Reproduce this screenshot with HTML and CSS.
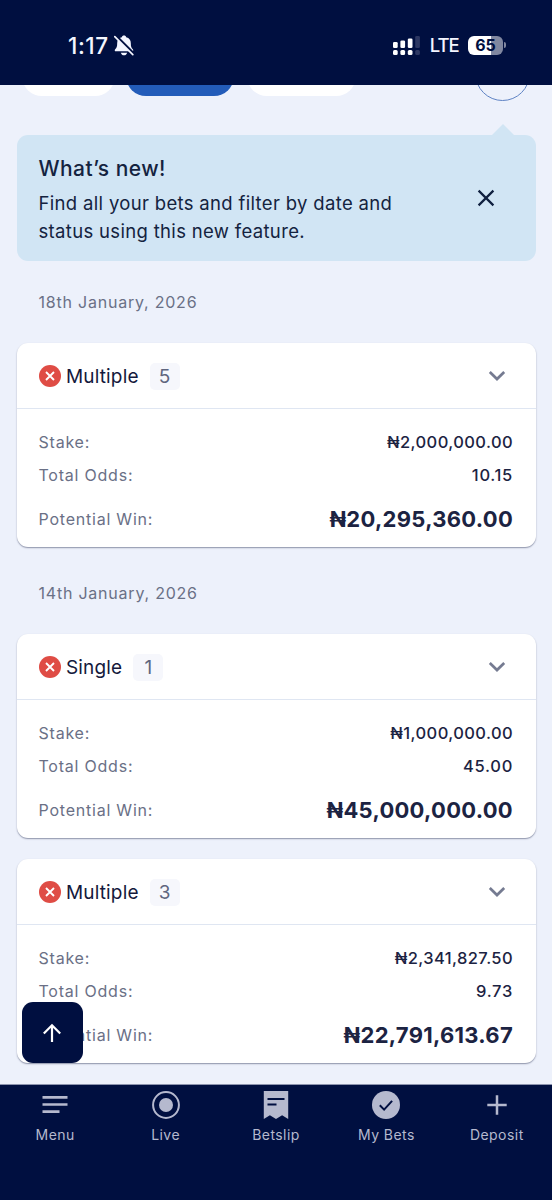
FILE: index.html
```html
<!DOCTYPE html>
<html lang="en">
<head>
<meta charset="utf-8">
<title>My Bets</title>
<link rel="stylesheet" href="styles.css">
</head>
<body>
<svg width="0" height="0" class="defs">
  <symbol id="lost" viewBox="0 0 22 22"><circle cx="11" cy="11" r="11" fill="#df4c45"/><path d="M7 7l8 8M15 7l-8 8" stroke="#fff" stroke-width="1.9" fill="none"/></symbol>
  <symbol id="chevron" viewBox="0 0 18 12"><path d="M1.8 2l7.2 7 7.2-7" stroke="#757b91" stroke-width="2.7" fill="none"/></symbol>
</svg>
<div class="screen">
  <header class="status">
    <div class="status-left">
      <span class="time">1:17</span>
      <svg class="bell" width="20" height="21" viewBox="0 0 20 21">
        <path d="M10 .5c-1.200 0-2 .7-2.200 1.700C4.600 3 3.200 5.200 3.200 8c0 3.800-.6 5-2 6.200-.9.800-.5 2.100.6 2.100h16.400c1.100 0 1.500-1.300.6-2.100-1.400-1.200-2-2.400-2-6.200 0-2.800-1.400-5-4.600-5.800C12 1.200 11.200.5 10 .5z" fill="#f4f6ff"/>
        <path d="M6.800 17.700h6.400c-.5 1.600-1.700 2.600-3.200 2.600s-2.700-1-3.200-2.600z" fill="#f4f6ff"/>
        <path d="M1.800 .8l18 18" stroke="#000f40" stroke-width="2.800"/>
        <path d="M.8 1.600l18 18" stroke="#f4f6ff" stroke-width="1.700" stroke-linecap="round"/>
      </svg>
    </div>
    <div class="status-right">
      <svg width="27" height="19" viewBox="0 0 27 19" fill="#fff">
        <rect x="0" y="6" width="4.700" height="6" rx="1.300"/><rect x="7.400" y="4.500" width="4.700" height="7.500" rx="1.300"/><rect x="14.800" y="2.500" width="4.700" height="9.500" rx="1.300"/>
        <rect x="0" y="14" width="4.700" height="5" rx="1.500"/><rect x="7.400" y="14" width="4.700" height="5" rx="1.500"/><rect x="14.800" y="14" width="4.700" height="5" rx="1.500"/>
        <g fill="#2c3762"><rect x="22.200" y="0" width="4.700" height="12" rx="1.300"/><rect x="22.200" y="14" width="4.700" height="5" rx="1.500"/></g>
      </svg>
      <span class="network">LTE</span>
      <span class="battery">65</span><span class="battery-tip"></span>
    </div>
  </header>

  <main class="content">
    <div class="filters">
      <span class="pill pill-a"></span><span class="pill pill-b"></span><span class="pill pill-c"></span><span class="round"></span>
    </div>
    <section class="notice">
      <div class="notice-text">
        <h1>What’s new!</h1>
        <p>Find all your bets and filter by date and<br>status using this new feature.</p>
      </div>
      <svg width="18" height="18" viewBox="0 0 18 18"><path d="M1.600 1.600l14.800 14.800M16.400 1.600L1.600 16.400" stroke="#10203f" stroke-width="2.200"/></svg>
    </section>

    <h2 class="date">18th January, 2026</h2>
    <article class="card">
      <div class="card-head"><svg width="22" height="22"><use href="#lost"/></svg><span class="kind">Multiple</span><span class="count">5</span><svg class="chev" width="18" height="12"><use href="#chevron"/></svg></div>
      <div class="card-body">
        <div class="row"><span>Stake:</span><b>₦2,000,000.00</b></div>
        <div class="row"><span>Total Odds:</span><b class="odds">10.15</b></div>
        <div class="row win"><span>Potential Win:</span><b>₦20,295,360.00</b></div>
      </div>
    </article>

    <h2 class="date">14th January, 2026</h2>
    <article class="card">
      <div class="card-head"><svg width="22" height="22"><use href="#lost"/></svg><span class="kind">Single</span><span class="count">1</span><svg class="chev" width="18" height="12"><use href="#chevron"/></svg></div>
      <div class="card-body">
        <div class="row"><span>Stake:</span><b>₦1,000,000.00</b></div>
        <div class="row"><span>Total Odds:</span><b class="odds">45.00</b></div>
        <div class="row win"><span>Potential Win:</span><b>₦45,000,000.00</b></div>
      </div>
    </article>
    <article class="card">
      <div class="card-head"><svg width="22" height="22"><use href="#lost"/></svg><span class="kind">Multiple</span><span class="count">3</span><svg class="chev" width="18" height="12"><use href="#chevron"/></svg></div>
      <div class="card-body">
        <div class="row"><span>Stake:</span><b>₦2,341,827.50</b></div>
        <div class="row"><span>Total Odds:</span><b class="odds">9.73</b></div>
        <div class="row win"><span>Potential Win:</span><b>₦22,791,613.67</b></div>
      </div>
    </article>
    <button class="to-top" aria-label="Scroll to top"><svg width="20" height="20" viewBox="0 0 20 20"><path d="M10 19V2.500M1.800 10.500L10 2.200l8.200 8.300" stroke="#fff" stroke-width="2.200" fill="none"/></svg></button>
  </main>

  <nav class="tabs">
    <a class="tab"><svg width="28" height="28" viewBox="0 0 28 28"><path d="M1.500 6.400h25M1.500 13.500h25M1.500 20.600h17" stroke="#b5b9ce" stroke-width="2.600"/></svg><span>Menu</span></a>
    <a class="tab"><svg width="28" height="28" viewBox="0 0 28 28"><circle cx="14" cy="14" r="12.900" fill="none" stroke="#b5b9ce" stroke-width="2"/><circle cx="14" cy="14" r="7" fill="#b5b9ce"/></svg><span>Live</span></a>
    <a class="tab"><svg width="28" height="28" viewBox="0 0 28 28"><path d="M1.800 0h24.400v28l-6.100-3.700L14 28l-6.100-3.700L1.800 28z" fill="#b5b9ce"/><path d="M5.500 8h17M5.500 13.500h9" stroke="#000f40" stroke-width="2"/></svg><span>Betslip</span></a>
    <a class="tab"><svg width="28" height="28" viewBox="0 0 28 28"><circle cx="14" cy="14" r="14" fill="#b5b9ce"/><path d="M7.800 14.200l4.300 4.400 8-8.800" stroke="#000f40" stroke-width="2" fill="none"/></svg><span>My Bets</span></a>
    <a class="tab"><svg width="28" height="28" viewBox="0 0 28 28"><path d="M14 4.300v19.400M4.300 14h19.400" stroke="#b5b9ce" stroke-width="2.500"/></svg><span>Deposit</span></a>
  </nav>
</div>
</body>
</html>
```

FILE: styles.css
```css
* { box-sizing: border-box; }
body { margin: 0; font-family: Inter, "Noto Sans", sans-serif; background: #edf1fb; }
h1, h2, p { margin: 0; font-weight: 400; }
.defs { display: block; }
.screen { width: 552px; height: 1200px; display: flex; flex-direction: column; overflow: hidden; }

.status { height: 85px; flex: none; background: #000f40; color: #f4f6ff; display: flex; justify-content: space-between; padding: 5px 46px 0 68px; }
.status-left, .status-right { display: flex; align-items: center; }
.time { font-size: 22.500px; font-weight: 550; letter-spacing: 0.6px; }
.bell { margin-left: 5px; }
.network { font-size: 18.500px; font-weight: 500; letter-spacing: -1.1px; margin-left: 10px; }
.battery { width: 35px; height: 19px; margin-left: 9.500px; border-radius: 6px; background: linear-gradient(90deg, #fff 65%, #8087a0 65%); color: #000f40; font-size: 16px; font-weight: 700; line-height: 19px; text-align: center; }
.battery-tip { width: 2px; height: 6px; margin-left: 1px; border-radius: 0 2px 2px 0; background: #8087a0; }

.content { position: relative; height: 999px; flex: none; overflow: hidden; padding: 0 16.500px; }
.filters { display: flex; align-items: flex-end; height: 16px; margin: 0 5.500px 33.500px; }
.pill { flex: none; height: 40px; border-radius: 20px; background: #fff; margin-bottom: 5px; }
.pill-a { width: 93px; }
.pill-b { width: 108px; margin-left: 11px; background: #235cb9; }
.pill-c { width: 109px; margin-left: 13px; }
.round { flex: none; width: 55px; height: 55px; border: 1px solid #5f83c4; border-radius: 50%; margin-left: 119px; }

.notice { position: relative; height: 126.500px; border-radius: 11px; background: #d1e5f4; color: #14233f; display: flex; justify-content: space-between; padding: 19px 40.500px 0 22px; }
.notice::before { content: ""; position: absolute; top: -11px; right: 22px; border: 11px solid transparent; border-top: 0; border-bottom-color: #d1e5f4; }
.notice h1 { font-size: 21px; line-height: 29px; font-weight: 450; letter-spacing: 0.45px; }
.notice p { font-size: 18.500px; line-height: 28px; letter-spacing: 0.33px; margin-top: 6.500px; }
.notice svg { margin-top: 35px; flex: none; }

.date { font-size: 16px; line-height: 20px; color: #6a7086; letter-spacing: 0.78px; padding: 31px 22px; }
.card + .date { padding-top: 36px; padding-bottom: 31px; }
.card { height: 204px; border-radius: 11px; background: #fff; box-shadow: 0 1px 1.500px #8b91a8; }
.card + .card { margin-top: 21px; }
.card-head { height: 66px; border-bottom: 1px solid #dfe6f2; display: flex; align-items: center; padding: 1px 30px 0 22px; }
.kind { font-size: 19px; color: #14193c; letter-spacing: 0.15px; margin-left: 5.500px; }
.count { width: 30px; height: 27px; margin-left: 11px; border-radius: 5px; background: #f6f7fc; color: #5f667f; font-size: 19px; line-height: 27px; text-align: center; }
.chev { margin-left: auto; }
.card-body { padding: 16px 22px 0; }
.row { height: 33px; display: flex; align-items: center; justify-content: space-between; color: #6a7086; font-size: 16px; letter-spacing: 0.78px; }
.row b { font-size: 16.500px; font-weight: 450; color: #1c2342; letter-spacing: 0.4px; margin-right: 0.500px; }
.row b.odds { letter-spacing: 0.7px; }
.row.win { height: 44px; padding-top: 11px; }
.row.win b { font-size: 22px; font-weight: 650; letter-spacing: 0.28px; }

.to-top { position: absolute; left: 22px; top: 917px; width: 60.500px; height: 61px; border: 0; padding: 0; border-radius: 11px; background: #000f40; display: grid; place-items: center; }

.tabs { flex: 1; background: #000f40; border-top: 1px solid #8d94ae; display: grid; grid-template-columns: repeat(5, 1fr); }
.tab { display: flex; flex-direction: column; align-items: center; padding-top: 6px; color: #b5b9ce; font-size: 14px; line-height: 18px; letter-spacing: 0.45px; gap: 7px; }
```
